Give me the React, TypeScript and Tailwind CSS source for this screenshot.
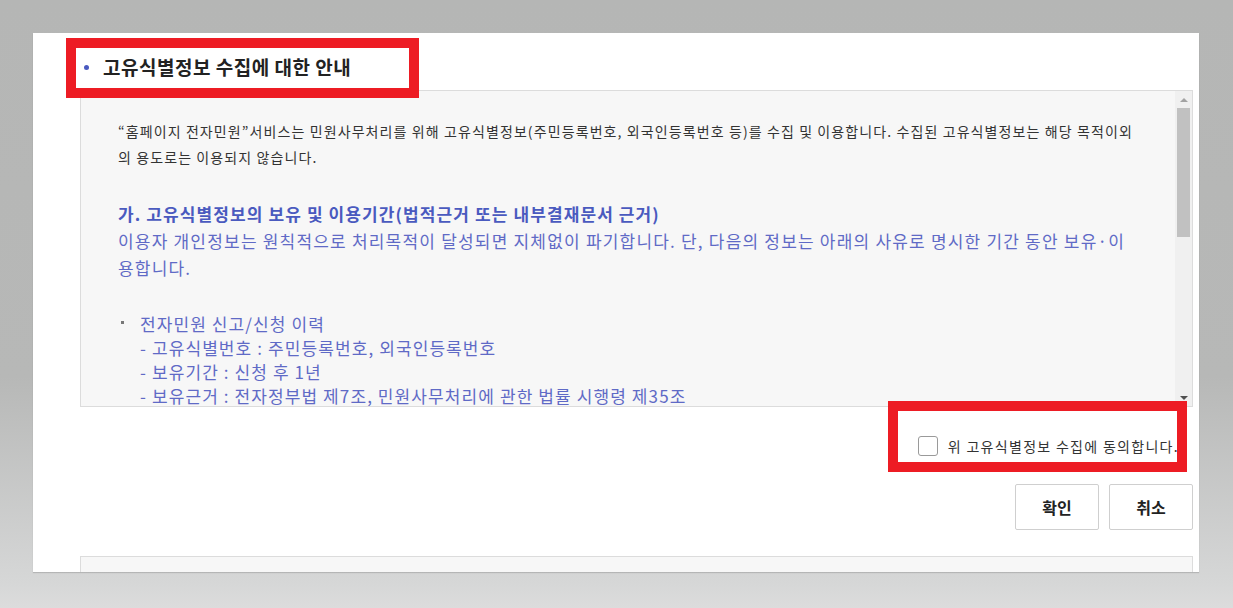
import React from 'react'

const ko = "font-['Malgun_Gothic','Noto_Sans_CJK_KR',sans-serif]"

function FakeScrollbar() {
  return (
    <div className="w-[17px] h-full bg-[#f0f0f0] flex flex-col items-center">
      {/* up arrow */}
      <div className="h-[17px] w-full flex items-center justify-center">
        <div className="w-0 h-0 border-l-[4px] border-r-[4px] border-b-[4px] border-l-transparent border-r-transparent border-b-[#a3a3a3]" />
      </div>
      {/* thumb */}
      <div className="w-[13px] h-[129px] bg-[#c1c1c1]" />
      <div className="flex-1" />
      {/* down arrow */}
      <div className="h-[17px] w-full flex items-center justify-center">
        <div className="w-0 h-0 border-l-[4px] border-r-[4px] border-t-[4px] border-l-transparent border-r-transparent border-t-[#505050]" />
      </div>
    </div>
  )
}

export default function App() {
  return (
    <div
      className={`relative w-[1233px] h-[608px] overflow-hidden bg-[linear-gradient(to_bottom,#b5b6b5_0%,#b7b8b7_62%,#d6d7d7_96%,#dcdcdc_100%)] ${ko}`}
    >
      {/* white panel */}
      <div className="ml-[33px] mt-[33px] w-[1166px] h-[539px] bg-white flex flex-col pl-[47px] pr-[6px] shadow-[0_1px_1px_rgba(0,0,0,0.15)]">
        {/* title */}
        <div className="h-[57px] pt-[22px] pb-[11px] flex items-center">
          <span className="ml-[4px] w-[5px] h-[5px] rounded-full bg-[#4a5ac0]" />
          <h2 className="ml-[14px] text-[19px] leading-[24px] font-bold text-[#222] tracking-[0.5px]">
            고유식별정보 수집에 대한 안내
          </h2>
        </div>

        {/* scroll box */}
        <div className="h-[317px] border border-[#dcdcdc] bg-[#f7f7f7] flex">
          <div className="flex-1 overflow-hidden pl-[37px] pt-[27px] pr-[10px]">
            <div className="text-[14px] leading-[26px] text-[#333] tracking-[1.1px]">
              <div className="whitespace-nowrap">
                “홈페이지 전자민원”서비스는 민원사무처리를 위해 고유식별정보(주민등록번호, 외국인등록번호 등)를 수집 및 이용합니다. 수집된 고유식별정보는 해당 목적이외
              </div>
              <div className="whitespace-nowrap">의 용도로는 이용되지 않습니다.</div>
            </div>

            <h3 className="mt-[31px] text-[17px] leading-[26px] font-bold text-[#4a5abf] whitespace-nowrap tracking-[1.1px]">
              가. 고유식별정보의 보유 및 이용기간(법적근거 또는 내부결재문서 근거)
            </h3>
            <div className="text-[17px] leading-[27px] text-[#5f6ac6] tracking-[1.2px]">
              <div className="whitespace-nowrap">
                이용자 개인정보는 원칙적으로 처리목적이 달성되면 지체없이 파기합니다. 단, 다음의 정보는 아래의 사유로 명시한 기간 동안 보유·이
              </div>
              <div className="whitespace-nowrap">용합니다.</div>
            </div>

            <ul className="mt-[31px] text-[17px] leading-[24px] text-[#5f6ac6] tracking-[1.1px]">
              <li className="flex">
                <span className="w-[22px] flex pt-[9px] pl-[3px]">
                  <span className="w-[3px] h-[3px] bg-[#777]" />
                </span>
                <div>
                  <div className="whitespace-nowrap">전자민원 신고/신청 이력</div>
                  <div className="whitespace-nowrap">- 고유식별번호 : 주민등록번호, 외국인등록번호</div>
                  <div className="whitespace-nowrap">- 보유기간 : 신청 후 1년</div>
                  <div className="whitespace-nowrap">- 보유근거 : 전자정부법 제7조, 민원사무처리에 관한 법률 시행령 제35조</div>
                </div>
              </li>
            </ul>
          </div>
          <FakeScrollbar />
        </div>

        {/* agree checkbox */}
        <div className="mt-[29px] flex justify-end items-center pr-[14px]">
          <label className="flex items-center">
            <span className="w-[20px] h-[20px] rounded-[3px] border border-[#9a9a9a] bg-white" />
            <span className="ml-[10px] text-[14px] leading-[20px] text-[#333] whitespace-nowrap tracking-[1.3px]">
              위 고유식별정보 수집에 동의합니다.
            </span>
          </label>
        </div>

        {/* buttons */}
        <div className="mt-[28px] flex justify-end gap-[10px]">
          <button className="w-[84px] h-[46px] border border-[#cfcfcf] rounded-[2px] bg-white text-[16px] font-bold text-[#222]">
            확인
          </button>
          <button className="w-[84px] h-[46px] border border-[#cfcfcf] rounded-[2px] bg-white text-[16px] font-bold text-[#222]">
            취소
          </button>
        </div>

        {/* next section box */}
        <div className="mt-[26px] flex-1 border-t border-x border-[#dcdcdc] bg-[#f7f7f7]" />
      </div>

      {/* red annotation boxes */}
      <div className="absolute left-[66px] top-[38px] w-[353px] h-[60px] border-[10px] border-[#ed1c24]" />
      <div className="absolute left-[888px] top-[401px] w-[299px] h-[71px] border-[10px] border-[#ed1c24]" />
    </div>
  )
}
